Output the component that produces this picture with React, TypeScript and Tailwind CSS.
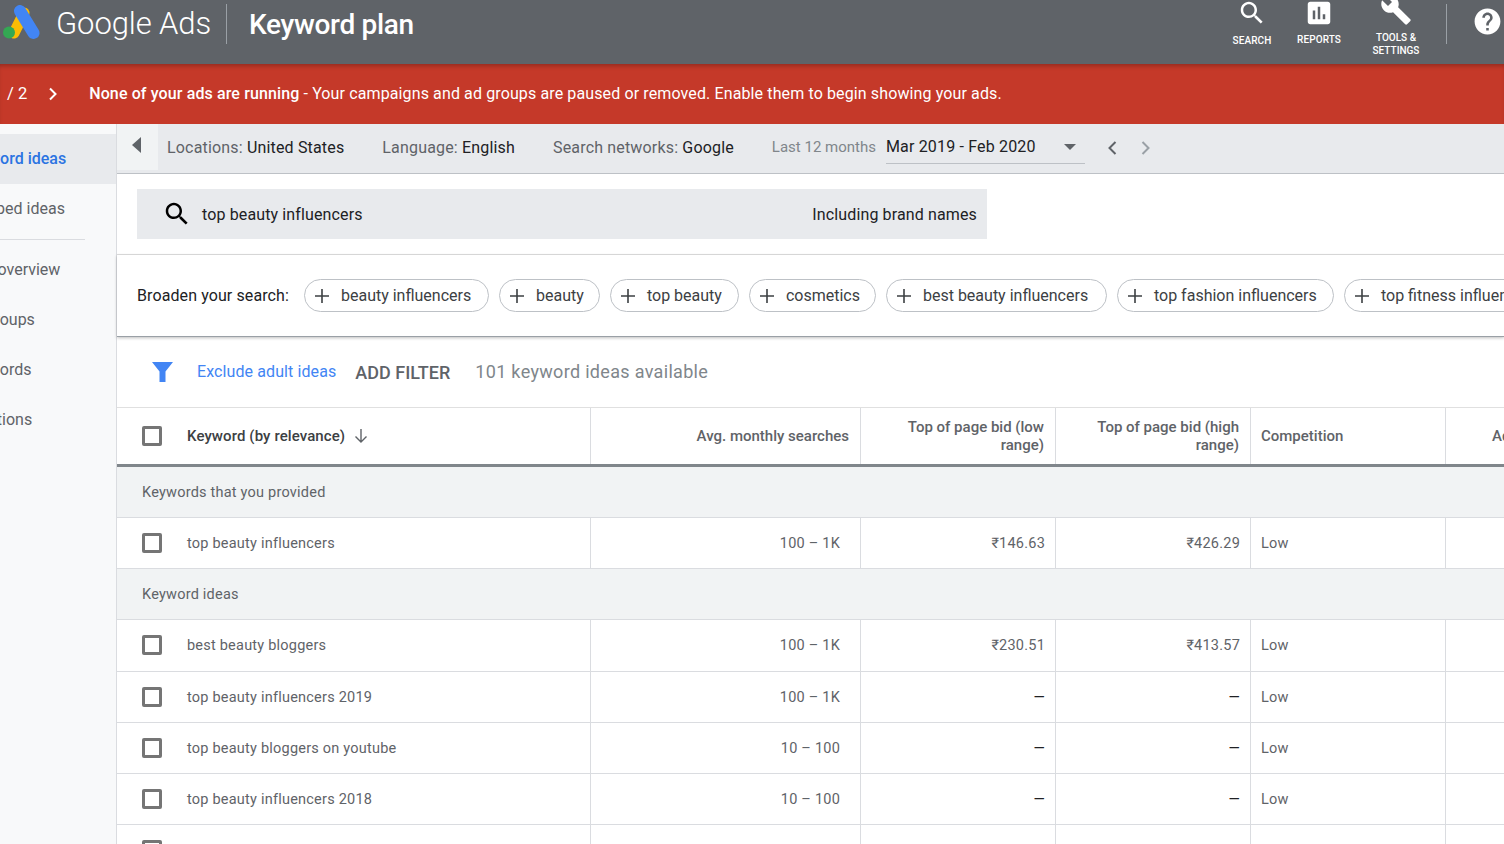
import React from 'react';

const font = { fontFamily: 'Roboto, "Noto Sans", sans-serif' };

const SearchPath = 'M15.5 14h-.79l-.28-.27C15.41 12.59 16 11.11 16 9.5 16 5.91 13.09 3 9.5 3S3 5.91 3 9.5 5.91 16 9.5 16c1.61 0 3.09-.59 4.23-1.57l.27.28v.79l5 4.99L20.49 19l-4.99-5zm-6 0C7.01 14 5 11.99 5 9.5S7.01 5 9.5 5 14 7.01 14 9.5 11.99 14 9.5 14z';

const Icon = ({ d, className }: { d: string; className: string }) => (
  <svg viewBox="0 0 24 24" fill="currentColor" className={className}>
    <path d={d} />
  </svg>
);

const Logo = () => (
  <svg viewBox="0 0 38 34" className="w-[38px] h-[34px] shrink-0">
    <path d="M12 28 L22 8" stroke="#fbbc04" strokeWidth="11" strokeLinecap="round" />
    <path d="M18 6 L31.5 28" stroke="#4285f4" strokeWidth="12" strokeLinecap="round" />
    <circle cx="7" cy="27.5" r="6" fill="#34a853" />
  </svg>
);

const Checkbox = ({ up }: { up?: boolean }) => (
  <div className={`w-5 h-5 border-[3px] border-[#757575] rounded-[2px] shrink-0 bg-white -ml-[1px] ${up ? '-mt-[1px]' : ''}`} />
);

const Chip = ({ label, width }: { label: string; width: string }) => (
  <div className={`h-[33px] flex items-center border border-[#bdc1c6] rounded-full pl-[10px] shrink-0 ${width}`}>
    <svg viewBox="0 0 14 14" className="w-[14px] h-[14px] text-[#3c4043]" stroke="currentColor" strokeWidth="1.6">
      <path d="M7 0v14M0 7h14" />
    </svg>
    <span className="ml-[12px] text-[16px] text-[#3c4043] whitespace-nowrap">{label}</span>
  </div>
);

const SideItem = ({ label, active }: { label: string; active?: boolean }) => (
  <div className={`h-[50px] flex items-center whitespace-nowrap text-[16px] ${active ? 'bg-[#e8eaed] text-[#2b74e2] font-medium' : 'text-[#5f6368]'}`}>
    <span className="-ml-[38px]">{label}</span>
  </div>
);

const cols = 'grid grid-cols-[474px_270px_195px_195px_195px_1fr]';
const cell = 'border-r border-[#dadce0] flex items-center';

const Bid = ({ value }: { value: string }) => (
  <span className={value === '—' ? 'text-[#202124]' : ''}>{value}</span>
);

const Row = ({ k, s, lo, hi, tall }: { k: string; s: string; lo: string; hi: string; tall?: boolean }) => {
  const nudge = tall ? '' : 'pt-[2px]';
  return (
    <div className={`${cols} ${tall ? 'h-[52px]' : 'h-[51px]'} border-b border-[#dadce0] text-[14.5px] tracking-[0.22px] text-[#5f6368] shrink-0`}>
      <div className={`${cell} pl-[26px]`}>
        <Checkbox up={tall} />
        <span className={`ml-[25px] ${nudge}`}>{k}</span>
      </div>
      <div className={`${cell} justify-end pr-[20px] ${nudge}`}>{s}</div>
      <div className={`${cell} justify-end pr-[10px] ${nudge}`}><Bid value={lo} /></div>
      <div className={`${cell} justify-end pr-[10px] ${nudge}`}><Bid value={hi} /></div>
      <div className={`${cell} pl-[10px] ${nudge}`}>Low</div>
      <div />
    </div>
  );
};

const Group = ({ label }: { label: string }) => (
  <div className="h-[51px] bg-[#f1f3f4] border-b border-[#dadce0] flex items-center pl-[25px] pt-[2px] text-[14.5px] tracking-[0.22px] text-[#5f6368] shrink-0">
    {label}
  </div>
);

const Head = ({ children }: { children: React.ReactNode }) => (
  <div className={`${cell} justify-end text-right px-[11px] leading-[18px]`}>{children}</div>
);

export default function App() {
  return (
    <div className="h-screen w-full overflow-hidden bg-white flex flex-col" style={font}>
      {/* Top bar */}
      <header className="h-[64px] bg-[#5f6368] flex items-center shrink-0 text-white overflow-hidden">
        <div className="ml-[2px] -mt-[21px]"><Logo /></div>
        <span className="ml-[16px] -mt-[16px] text-[31px] font-light tracking-[-0.1px] whitespace-nowrap">Google Ads</span>
        <div className="ml-[15px] -mt-[16px] w-px h-[40px] bg-[#9aa0a6]" />
        <span className="ml-[22px] -mt-[14px] text-[28px] font-medium tracking-[-0.3px] whitespace-nowrap">Keyword plan</span>
        <nav className="ml-auto flex h-full items-start">
          <div className="w-[60px] flex flex-col items-center -mt-[2px]">
            <Icon d={SearchPath} className="w-[30px] h-[30px]" />
            <span className="mt-[5px] text-[10px] font-medium tracking-[0.1px]">SEARCH</span>
          </div>
          <div className="ml-[7px] w-[60px] flex flex-col items-center -mt-[2px]">
            <Icon d="M19 3H5c-1.1 0-2 .9-2 2v14c0 1.1.9 2 2 2h14c1.100 0 2-.9 2-2V5c0-1.100-.9-2-2-2zM9 17H7v-7h2v7zm4 0h-2V7h2v10zm4 0h-2v-4h2v4z" className="w-[30px] h-[30px]" />
            <span className="mt-[4px] text-[10px] font-medium tracking-[0.1px]">REPORTS</span>
          </div>
          <div className="ml-[17px] w-[60px] flex flex-col items-center -mt-[6px]">
            <Icon d="M22.7 19l-9.100-9.100c.9-2.300.4-5-1.500-6.900-2-2-5-2.400-7.400-1.300L9 6 6 9 1.600 4.700C.4 7.100.9 10.100 2.900 12.100c1.900 1.900 4.600 2.400 6.900 1.500l9.100 9.100c.4.4 1 .4 1.400 0l2.300-2.300c.5-.4.5-1.100.1-1.400z" className="w-[32px] h-[32px]" />
            <span className="mt-[5px] text-[10px] font-medium text-center leading-[13px] whitespace-nowrap">TOOLS &amp;<br />SETTINGS</span>
          </div>
          <div className="ml-[20px] mt-[4px] w-px h-[40px] bg-[#9aa0a6]" />
          <div className="ml-[25px] mt-[6px] mr-[-1px] w-[33px]">
            <Icon d="M12 2C6.480 2 2 6.480 2 12s4.480 10 10 10 10-4.480 10-10S17.520 2 12 2zm1 17h-2v-2h2v2zm2.070-7.750l-.9.920C13.450 12.900 13 13.500 13 15h-2v-.5c0-1.100.45-2.100 1.170-2.830l1.240-1.260c.37-.36.59-.86.59-1.410 0-1.100-.9-2-2-2s-2 .9-2 2H8c0-2.210 1.790-4 4-4s4 1.790 4 4c0 .88-.36 1.680-.93 2.250z" className="w-[31px] h-[31px]" />
          </div>
        </nav>
      </header>

      {/* Alert */}
      <div className="h-[60px] bg-[#c53929] flex items-center text-white shrink-0 shadow-[inset_0_4px_4px_-2px_rgba(0,0,0,0.25)]">
        <span className="ml-[7px] text-[16.5px]">/ 2</span>
        <svg viewBox="0 0 10 14" className="ml-[21px] w-[10px] h-[14px]" fill="none" stroke="currentColor" strokeWidth="2">
          <path d="M2 1.500 7.500 7 2 12.500" />
        </svg>
        <span className="ml-[31px] text-[16px] tracking-[0.12px] whitespace-nowrap"><span className="font-medium">None of your ads are running</span> - Your campaigns and ad groups are paused or removed. Enable them to begin showing your ads.</span>
      </div>

      <div className="flex flex-1 min-h-0">
        {/* Sidebar */}
        <aside className="w-[117px] shrink-0 bg-[#f8f9fa] border-r border-[#dadce0] pt-[10px] overflow-hidden">
          <SideItem label="Keyword ideas" active />
          <SideItem label="Grouped ideas" />
          <div className="mt-[5px] mb-[5px] h-px w-[85px] bg-[#dadce0]" />
          <SideItem label="Plan overview" />
          <SideItem label="Ad groups" />
          <SideItem label="Keywords" />
          <SideItem label="Locations" />
        </aside>

        <main className="flex-1 min-w-0 flex flex-col">
          {/* Filter bar */}
          <div className="h-[50px] bg-[#e8eaed] border-b border-[#bdc1c6] flex shrink-0 text-[16px] tracking-[0.17px] whitespace-nowrap">
            <div className="w-[41px] h-[46px] bg-[#f1f3f4] flex items-center justify-center">
              <svg viewBox="0 0 9 16" className="w-[9px] h-[16px] -ml-[2px] -mt-[4px]"><path d="M9 0v16L0 8z" fill="#5f6368" /></svg>
            </div>
            <div className="ml-[9px] flex items-center -mt-[2px] text-[#202124]">
              <span className="text-[#5f6368]">Locations:&nbsp;</span>United States
              <span className="ml-[38px] text-[#5f6368]">Language:&nbsp;</span>English
              <span className="ml-[38px] text-[#5f6368]">Search networks:&nbsp;</span>Google
              <span className="ml-[38px] text-[15px] tracking-normal text-[#80868b]">Last 12 months</span>
              <div className="ml-[10px] w-[199px] h-[33px] border-b border-[#bdc1c6] flex items-center justify-between pr-[9px] -mt-[1px]">
                <span>Mar 2019 - Feb 2020</span>
                <svg viewBox="0 0 12 6" className="w-[12px] h-[6px]"><path d="M0 0h12L6 6z" fill="#5f6368" /></svg>
              </div>
              <svg viewBox="0 0 10 16" className="ml-[22px] w-[10px] h-[16px]" fill="none" stroke="#5f6368" strokeWidth="2"><path d="M8.500 2 2.500 8l6 6" /></svg>
              <svg viewBox="0 0 10 16" className="ml-[24px] w-[10px] h-[16px]" fill="none" stroke="#9aa0a6" strokeWidth="2"><path d="M1.500 2l6 6-6 6" /></svg>
            </div>
          </div>

          {/* Search */}
          <div className="h-[81px] border-b border-[#e0e0e0] pl-[20px] pt-[15px] shrink-0">
            <div className="w-[850px] h-[50px] bg-[#e8eaed] flex items-center pl-[25px] pr-[10px] text-[16px] tracking-[0.13px] text-[#202124]">
              <Icon d={SearchPath} className="w-[30px] h-[30px] text-black" />
              <span className="ml-[10px] mt-[2px]">top beauty influencers</span>
              <span className="ml-auto mt-[2px]">Including brand names</span>
            </div>
          </div>

          {/* Broaden */}
          <div className="h-[82px] flex items-center pl-[20px] gap-[10px] overflow-hidden shrink-0 border-b border-[#9aa0a6] shadow-[0_1px_3px_rgba(0,0,0,0.25)]">
            <span className="mr-[5px] text-[16px] tracking-[0.1px] text-[#202124] whitespace-nowrap">Broaden your search:</span>
            <Chip label="beauty influencers" width="w-[185px]" />
            <Chip label="beauty" width="w-[101px]" />
            <Chip label="top beauty" width="w-[129px]" />
            <Chip label="cosmetics" width="w-[127px]" />
            <Chip label="best beauty influencers" width="w-[221px]" />
            <Chip label="top fashion influencers" width="w-[217px]" />
            <Chip label="top fitness influencers" width="w-[217px]" />
          </div>

          {/* Filters */}
          <div className="h-[71px] flex items-center pl-[35px] border-b border-[#e0e0e0] shrink-0 whitespace-nowrap">
            <svg viewBox="0 0 21 20" className="w-[21px] h-[20px]"><path d="M0 0h21l-7.500 9.500V20h-6V9.500z" fill="#4285f4" /></svg>
            <span className="ml-[24px] text-[16px] tracking-[0.1px] text-[#4285f4]">Exclude adult ideas</span>
            <span className="ml-[19px] text-[18px] font-medium text-[#5f6368]">ADD FILTER</span>
            <span className="ml-[25px] -mt-[2px] text-[18px] tracking-[0.32px] text-[#80868b]">101 keyword ideas available</span>
          </div>

          {/* Table header */}
          <div className={`${cols} h-[59px] border-b-[3px] border-[#80868b] text-[15px] font-medium text-[#5f6368] shrink-0`}>
            <div className={`${cell} pl-[26px]`}>
              <Checkbox />
              <span className="ml-[25px] text-[#3c4043] tracking-[0.1px] whitespace-nowrap">Keyword (by relevance)</span>
              <svg viewBox="0 0 14 14" className="ml-[9px] w-[14px] h-[14px]" fill="none" stroke="#5f6368" strokeWidth="1.400"><path d="M7 0v13M1.500 7.500 7 13l5.500-5.500" /></svg>
            </div>
            <div className={`${cell} justify-end pr-[11px]`}>Avg. monthly searches</div>
            <Head>Top of page bid (low range)</Head>
            <Head>Top of page bid (high range)</Head>
            <div className={`${cell} pl-[10px]`}>Competition</div>
            <div className="flex items-center overflow-hidden pl-[46px]"><span className="whitespace-nowrap">Ad impression share</span></div>
          </div>

          <Group label="Keywords that you provided" />
          <Row k="top beauty influencers" s="100 – 1K" lo="₹146.63" hi="₹426.29" />
          <Group label="Keyword ideas" />
          <Row k="best beauty bloggers" s="100 – 1K" lo="₹230.51" hi="₹413.57" tall />
          <Row k="top beauty influencers 2019" s="100 – 1K" lo="—" hi="—" />
          <Row k="top beauty bloggers on youtube" s="10 – 100" lo="—" hi="—" />
          <Row k="top beauty influencers 2018" s="10 – 100" lo="—" hi="—" />
          <Row k="top beauty bloggers of 2018" s="10 – 100" lo="—" hi="—" />
        </main>
      </div>
    </div>
  );
}
